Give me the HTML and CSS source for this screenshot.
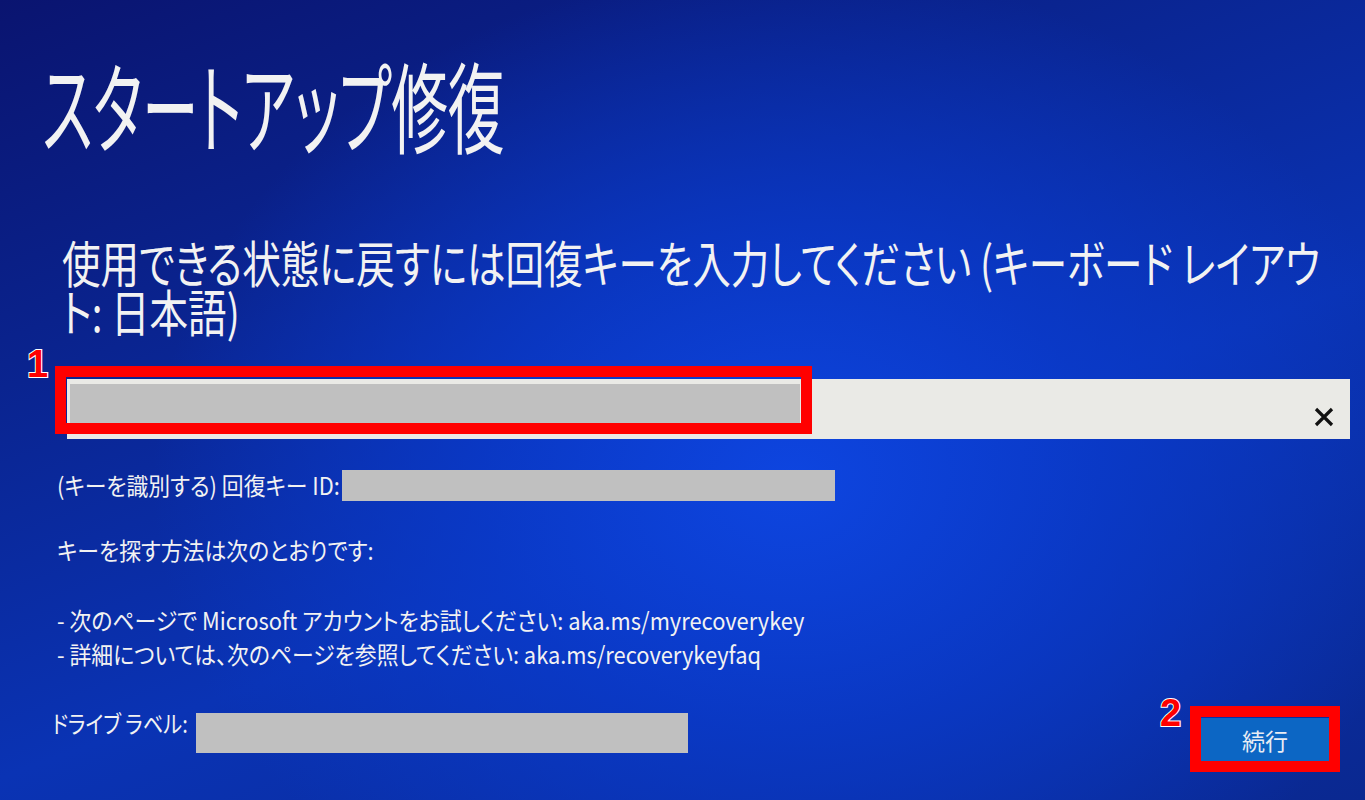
FILE: index.html
```html
<!DOCTYPE html>
<html lang="ja">
<head>
<meta charset="utf-8">
<title>スタートアップ修復</title>
<link rel="stylesheet" href="styles.css">
</head>
<body>
<main class="screen">
  <h1 class="title"><span class="sx sx-title">スタートアップ修復</span></h1>
  <div class="prompt">
    <div class="prompt-line"><span class="sx sy-prompt">使用できる状態に戻すには回復キーを入力してください (キーボード レイアウ</span></div>
    <div class="prompt-line"><span class="sx sy-prompt">ト: 日本語)</span></div>
  </div>

  <div class="keyrow">
    <div class="field">
      <div class="field-mask"></div>
      <span class="clear">
        <svg width="24" height="24" viewBox="0 0 24 24"><path d="M4 4 L20 20 M20 4 L4 20" stroke="#111" stroke-width="3.2" fill="none"/></svg>
      </span>
    </div>
    <div class="mark mark-field"></div>
    <span class="num num-1">1</span>
  </div>

  <div class="info">
    <div class="idrow">
      <span class="label-id"><span class="sx sx-small">(キーを識別する) 回復キー ID:</span></span>
      <span class="mask mask-id"></span>
    </div>
    <p class="line gap"><span class="sx sx-small">キーを探す方法は次のとおりです:</span></p>
    <p class="line gap2"><span class="sx sx-small">- 次のページで Microsoft アカウントをお試しください: aka.ms/myrecoverykey</span></p>
    <p class="line"><span class="sx sx-small">- 詳細については、次のページを参照してください: aka.ms/recoverykeyfaq</span></p>
  </div>

  <div class="footer">
    <div class="driverow">
      <span class="label-drive"><span class="sx sx-drive">ドライブ ラベル:</span></span>
      <span class="mask mask-drive"></span>
    </div>
    <div class="btnwrap">
      <button class="continue" type="button">続行</button>
      <div class="mark mark-btn"></div>
      <span class="num num-2">2</span>
    </div>
  </div>
</main>
</body>
</html>
```

FILE: styles.css
```css
html, body {
  margin: 0;
  padding: 0;
}
body {
  width: 1365px;
  height: 800px;
  overflow: hidden;
  font-family: "Noto Sans CJK JP", "Noto Sans", sans-serif;
  font-feature-settings: "palt";
  color: #f2f2f2;
  background:
    radial-gradient(ellipse 820px 660px at 58% 60%, rgba(14, 70, 226, 0.95) 0%, rgba(10, 60, 208, 0.7) 38%, rgba(10, 45, 170, 0) 78%),
    linear-gradient(160deg, #0a1470 0%, #0a2490 30%, #0a33b4 60%, #0a2890 100%);
}
.screen {
  display: flex;
  flex-direction: column;
  padding: 0 0 0 42px;
  box-sizing: border-box;
  width: 1365px;
  height: 800px;
}
.sx {
  display: inline-block;
  white-space: nowrap;
  transform-origin: 0 50%;
}
.title {
  margin: 47px 0 0 0;
  font-weight: 400;
  font-size: 99px;
  line-height: 112px;
  height: 112px;
}
.sx-title { transform: scaleX(0.572); }
.prompt {
  margin: 78px 0 0 20px;
  font-size: 33.8px;
}
.prompt-line {
  height: 49px;
  line-height: 49px;
}
.sy-prompt { transform: scale(1.1405, 1.479); }
.keyrow {
  position: relative;
  margin: 44px 0 0 25px;
  height: 60px;
}
.field {
  display: flex;
  align-items: center;
  justify-content: space-between;
  width: 1283px;
  height: 60px;
  background: #eaeae6;
  box-sizing: border-box;
  padding: 3px 14px 2px 3px;
}
.field-mask {
  width: 730px;
  height: 40px;
  background: #c0c0c0;
  margin-top: -12px;
}
.clear {
  display: flex;
  margin-top: 14px;
}
.mark {
  position: absolute;
  border: 11px solid #ff0000;
  box-sizing: border-box;
}
.mark-field {
  left: -12px;
  top: -13px;
  width: 757px;
  height: 68px;
}
.num {
  position: absolute;
  font-family: "Liberation Sans", Arial, sans-serif;
  font-weight: 700;
  font-size: 38px;
  line-height: 38px;
  color: #ff0000;
  -webkit-text-stroke: 2px #ffffff;
  paint-order: stroke fill;
}
.num-1 { left: -40px; top: -34px; }
.info {
  margin: 30px 0 0 15px;
  font-size: 24px;
}
.sx-small { transform: scaleX(0.91); }
.sx-drive { transform: scaleX(0.84); }
.idrow {
  display: flex;
  align-items: center;
  height: 32px;
}
.label-id { width: 285px; line-height: 32px; }
.mask {
  display: block;
  background: #c0c0c0;
}
.mask-id {
  width: 493px;
  height: 31px;
}
.line {
  margin: 0;
  line-height: 34px;
}
.gap { margin-top: 32px; }
.gap2 { margin-top: 36px; }
.footer {
  display: flex;
  justify-content: space-between;
  align-items: flex-start;
  margin: 42px 0 0 10px;
  padding-right: 35px;
  font-size: 24px;
}
.driverow {
  display: flex;
  align-items: flex-start;
}
.label-drive { width: 144px; line-height: 30px; margin-top: -5px; }
.mask-drive {
  width: 492px;
  height: 40px;
}
.btnwrap {
  position: relative;
  margin-top: 5px;
}
.continue {
  display: flex;
  align-items: center;
  justify-content: center;
  width: 130px;
  height: 44px;
  border: 0;
  padding: 0;
  background: #0c66c4;
  color: #e8ecf4;
  font-family: "Noto Sans CJK JP", sans-serif;
  font-size: 23px;
}
.mark-btn {
  left: -10px;
  top: -12px;
  width: 150px;
  height: 66px;
}
.num-2 { left: -40px; top: -24px; }
```
